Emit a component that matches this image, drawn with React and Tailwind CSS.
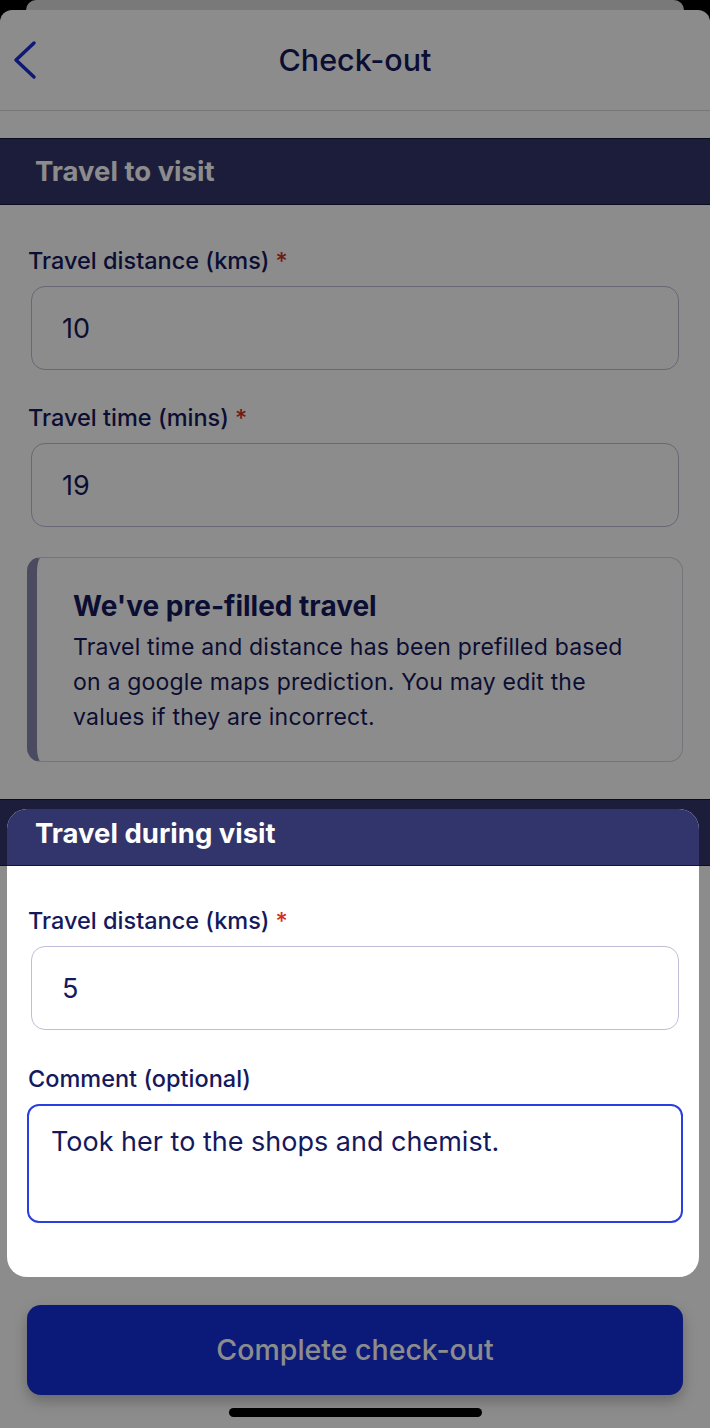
import React from 'react';

const navy = 'text-[#15195c]';

const Field = ({ label, required, value }) => (
  <div>
    <div className={`text-[23.5px] leading-[30px] font-medium ${navy}`}>
      {label}
      {required && <span className="text-[#d3301c] ml-[6px]">*</span>}
    </div>
    <input
      readOnly
      value={value}
      className={`mt-[10px] ml-[3px] w-[648px] h-[84px] rounded-[14px] border border-[#bdbdd6] bg-white pl-[30px] text-[27px] ${navy} outline-none`}
    />
  </div>
);

const SectionBand = ({ title }) => (
  <div className="h-[67px] bg-[#32356b] border-y border-[#14163a] flex items-center pl-[35px]">
    <h2 className="text-[27.5px] font-bold text-white">{title}</h2>
  </div>
);

export default function App() {
  return (
    <div className="relative w-[710px] h-[1428px] bg-black overflow-hidden font-['Inter',sans-serif]">
      <div className="flex flex-col h-full">
        {/* sheet behind */}
        <div className="h-[10px] mx-[26px] rounded-t-[10px] bg-[#dcdcdc]" />

        {/* main sheet */}
        <div className="flex-1 flex flex-col bg-white rounded-t-[12px]">
          <header className="relative h-[101px] flex items-center justify-center border-b border-[#d8d8d8]">
            <button className="absolute left-[12px] top-[30px] text-[#1a2fd6]">
              <svg width="26" height="40" viewBox="0 0 26 40" fill="none" stroke="currentColor" strokeWidth="3.5" strokeLinecap="round" strokeLinejoin="round">
                <path d="M22 3L4 20L22 37" />
              </svg>
            </button>
            <h1 className={`text-[30.5px] font-medium ${navy}`}>Check-out</h1>
          </header>

          <div className="mt-[27px]">
            <SectionBand title="Travel to visit" />
            <div className="px-[28px] pt-[41px] flex flex-col gap-[33px]">
              <Field label="Travel distance (kms)" required value="10" />
              <Field label="Travel time (mins)" required value="19" />
            </div>

            <div className="mx-[27px] mt-[30px] h-[205px] rounded-[14px] border border-[#d4d4de] border-l-[10px] border-l-[#8789b0] pl-[36px] pr-[50px] pt-[31px]">
              <h3 className={`text-[28px] leading-[34px] font-bold ${navy}`}>We've pre-filled travel</h3>
              <p className={`mt-[7px] text-[23px] leading-[35px] tracking-[0.2px] ${navy}`}>
                Travel time and distance has been prefilled based on a google maps prediction. You may edit the values if they are incorrect.
              </p>
            </div>

            <div className="mt-[37px]">
              <SectionBand title="Travel during visit" />
            </div>
          </div>

          <div className="mt-auto px-[27px] pb-[33px]">
            <button className="w-full h-[90px] rounded-[14px] bg-[#142fda] text-white text-[28.5px] font-medium shadow-[0_6px_14px_rgba(0,0,0,0.25)]">
              Complete check-out
            </button>
          </div>
        </div>
      </div>

      {/* dim overlay */}
      <div className="absolute inset-0 bg-black/45" />

      {/* spotlight card */}
      <div className="absolute left-[7px] top-[809px] w-[692px] h-[468px] rounded-[20px] bg-white overflow-hidden">
        <div className="h-[57px] bg-[#32356b] border-b border-[#14163a] pl-[28px] pt-[8px]">
          <h2 className="text-[27.5px] leading-[32px] font-bold text-white">Travel during visit</h2>
        </div>
        <div className="pl-[21px] pt-[40px]">
          <Field label="Travel distance (kms)" required value="5" />
          <div className={`mt-[34px] text-[23.5px] leading-[30px] font-medium ${navy}`}>Comment (optional)</div>
          <textarea
            readOnly
            value="Took her to the shops and chemist."
            className={`mt-[10px] -ml-[1px] block w-[656px] h-[119px] resize-none rounded-[12px] border-2 border-[#2a3fe0] pl-[22px] pt-[20px] text-[27px] leading-[32px] ${navy} outline-none`}
          />
        </div>
      </div>

      {/* home indicator */}
      <div className="absolute left-[229px] top-[1408px] w-[253px] h-[9px] rounded-full bg-black" />
    </div>
  );
}
